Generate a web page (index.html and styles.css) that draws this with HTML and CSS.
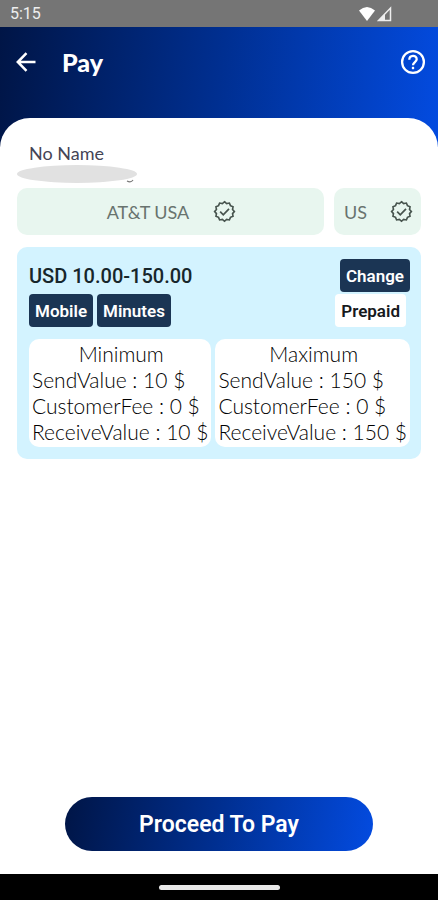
FILE: index.html
```html
<!DOCTYPE html>
<html lang="en">
<head>
  <meta charset="utf-8">
  <meta name="viewport" content="width=device-width, initial-scale=1">
  <title>Pay</title>
  <link rel="stylesheet" href="styles.css">
</head>
<body>
  <svg class="defs" aria-hidden="true">
    <symbol id="verified" viewBox="0 0 24 24">
      <path d="M12 1.8l2.2 1.9 2.9-.5 1.1 2.7 2.7 1.1-.5 2.9 1.9 2.1-1.9 2.2.5 2.8-2.7 1.1-1.1 2.7-2.9-.5-2.2 1.9-2.2-1.9-2.9.5-1.1-2.7-2.7-1.1.5-2.8L1.700 12l1.900-2.100-.5-2.900 2.700-1.100 1.100-2.700 2.900.5z" fill="none" stroke="currentColor" stroke-width="1.700" stroke-linejoin="miter"/>
      <path d="M7.500 12.200l3.200 3.200 6-6.200" fill="none" stroke="currentColor" stroke-width="1.800"/>
    </symbol>
  </svg>
  <div class="screen">
    <div class="status">
      <span>5:15</span>
      <span class="signals">
        <svg width="18" height="16" viewBox="0 0 18 16" aria-hidden="true"><path d="M1 4.500Q9-2.500 17 4.500L9 15z" fill="#fff"/></svg>
        <svg width="15" height="16" viewBox="0 0 15 16" aria-hidden="true"><path d="M13.500 2v12.500H1.500z" fill="none" stroke="#eee" stroke-width="1.500"/><path d="M1 15L8 7.500V15z" fill="#eee"/></svg>
      </span>
    </div>
    <header class="header">
      <button class="icon-button" type="button" aria-label="Back">
        <svg width="20" height="20" viewBox="0 0 20 20" fill="none" stroke="currentColor" stroke-width="2.500"><path d="M19.500 10H2M10.500 1.200L1.800 10l8.700 8.800"/></svg>
      </button>
      <h1>Pay</h1>
      <button class="icon-button" type="button" aria-label="Help">
        <svg width="26" height="26" viewBox="0 0 26 26" fill="none" stroke="currentColor" stroke-width="2.300"><circle cx="13" cy="13" r="10.900"/><path d="M9.300 10.800C9.300 5.600 16.700 5.600 16.700 10.300C16.700 13 13 13.200 13 16.200"/><path d="M13 17.800v2.400"/></svg>
      </button>
    </header>
    <main class="sheet">
      <p class="name">No Name</p>
      <svg class="redacted" viewBox="0 0 120 18" aria-hidden="true">
        <ellipse cx="60" cy="9" rx="60" ry="9" fill="#e1e1e1"/>
        <path d="M110 16q4 2 6-1" fill="none" stroke="#777" stroke-width="1.200"/>
      </svg>
      <div class="fields">
        <div class="field carrier"><span>AT&amp;T USA</span><svg class="badge"><use href="#verified"/></svg></div>
        <div class="field country"><span>US</span><svg class="badge"><use href="#verified"/></svg></div>
      </div>
      <section class="plan">
        <div class="row">
          <h2>USD 10.00-150.00</h2>
          <button class="tag" type="button">Change</button>
        </div>
        <div class="row tags">
          <span class="tag">Mobile</span>
          <span class="tag">Minutes</span>
          <span class="tag light">Prepaid</span>
        </div>
        <div class="limits">
          <div class="limit">
            <h3>Minimum</h3>
            <p>SendValue : 10 $</p>
            <p>CustomerFee : 0 $</p>
            <p>ReceiveValue : 10 $</p>
          </div>
          <div class="limit">
            <h3>Maximum</h3>
            <p>SendValue : 150 $</p>
            <p>CustomerFee : 0 $</p>
            <p>ReceiveValue : 150 $</p>
          </div>
        </div>
      </section>
      <button class="proceed" type="button">Proceed To Pay</button>
    </main>
    <div class="nav"><div class="handle"></div></div>
  </div>
</body>
</html>
```
FILE: styles.css
```css
* {
  box-sizing: border-box;
}

body,
h1,
h2,
h3,
p {
  margin: 0;
}

body {
  font-family: Lato, sans-serif;
  color: #222;
}

button {
  border: 0;
  font: inherit;
  cursor: pointer;
}

.defs {
  display: none;
}

.screen {
  min-height: 100vh;
  display: flex;
  flex-direction: column;
  background: linear-gradient(96deg, #001546 0%, #002f91 50%, #034be0 100%) 0 27px / 100% 120px no-repeat #fff;
}

.status {
  height: 27px;
  padding: 0 46px 0 10px;
  display: flex;
  align-items: center;
  justify-content: space-between;
  background: #757575;
  color: #eee;
  font: 16px Roboto, sans-serif;
}

.signals {
  display: flex;
  gap: 1px;
}

.header {
  height: 91px;
  padding: 14px 12px 0 16px;
  display: flex;
  align-items: flex-start;
  color: #fff;
}

.header h1 {
  flex: 1;
  margin-left: 26px;
  font-size: 25px;
  line-height: 42px;
  font-weight: 900;
}

.icon-button {
  height: 42px;
  padding: 0;
  display: flex;
  align-items: center;
  background: none;
  color: #fff;
}

.sheet {
  flex: 1;
  padding: 23px 17px 23px;
  display: flex;
  flex-direction: column;
  background: #fff;
  border-radius: 30px 30px 0 0;
}

.name {
  padding-left: 12px;
  font-size: 18px;
  line-height: 24px;
  color: #445;
}

.redacted {
  width: 120px;
  height: 18px;
}

.fields {
  margin-top: 5px;
  display: flex;
  gap: 10px;
}

.field {
  height: 47px;
  display: flex;
  align-items: center;
  border-radius: 10px;
  background: #e8f6ef;
  color: #68736e;
  font-size: 18px;
}

.carrier {
  flex: 1;
  justify-content: center;
  gap: 24px;
  padding-left: 2px;
}

.country {
  width: 87px;
  padding: 0 8px 0 10px;
  justify-content: space-between;
}

.badge {
  width: 23px;
  height: 23px;
  color: #46534d;
}

.plan {
  margin-top: 12px;
  padding: 12px 11px 12px 12px;
  border-radius: 10px;
  background: #d3f3ff;
}

.row {
  display: flex;
  align-items: center;
  gap: 4px;
}

.row h2 {
  flex: 1;
  font: 500 20px Roboto, sans-serif;
  color: #17262b;
}

.tags {
  margin-top: 2px;
}

.tag {
  height: 33px;
  padding: 0 6px;
  display: flex;
  align-items: center;
  border-radius: 4px;
  background: #1b3554;
  color: #fff;
  font: 600 17px Roboto, sans-serif;
}

.light {
  margin: 0 4px 0 auto;
  background: #fff;
  color: #16191c;
}

.limits {
  margin-top: 12px;
  display: flex;
  gap: 4px;
}

.limit {
  flex: 1 1 auto;
  padding: 2px 1px 2px 3px;
  border-radius: 10px;
  background: #fff;
  font-size: 21px;
  font-weight: 300;
  line-height: 26px;
  color: #000;
  white-space: nowrap;
}

.limit h3 {
  font: inherit;
  text-align: center;
}

.proceed {
  width: 76%;
  height: 54px;
  margin: auto auto 0;
  border-radius: 27px;
  background: linear-gradient(100deg, #001546 0%, #002f91 50%, #034be0 100%);
  color: #fff;
  font: 600 23px Roboto, sans-serif;
}

.nav {
  height: 26px;
  display: flex;
  align-items: center;
  justify-content: center;
  background: #000;
}

.handle {
  width: 121px;
  height: 5px;
  border-radius: 3px;
  background: #e8e8e8;
}
```
